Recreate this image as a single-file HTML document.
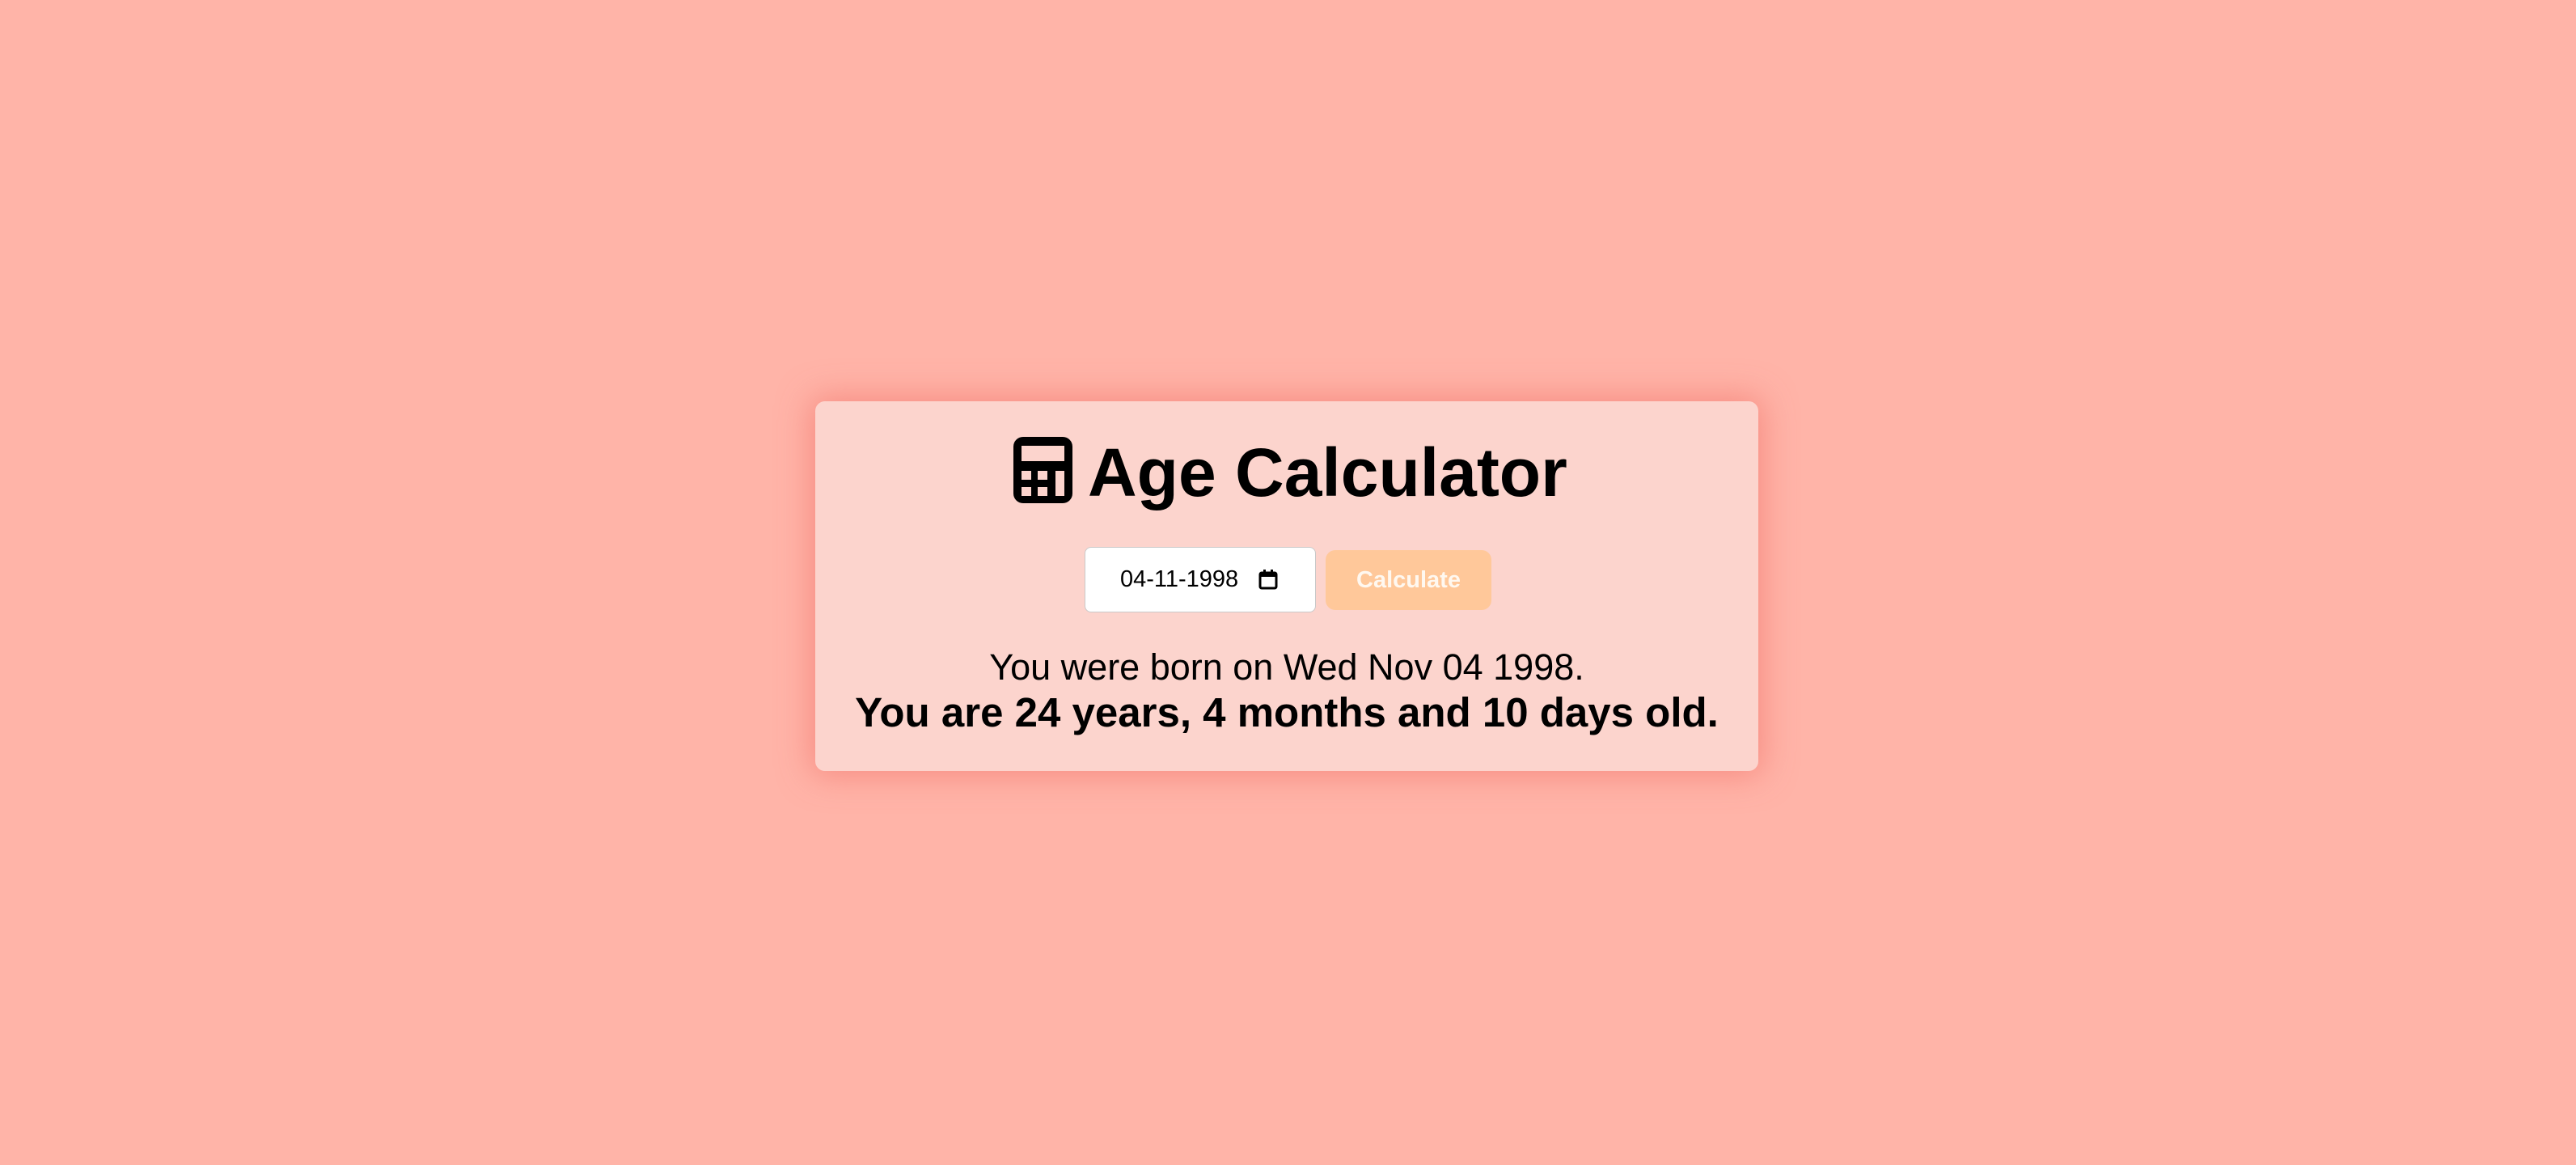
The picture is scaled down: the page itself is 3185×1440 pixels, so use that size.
<!DOCTYPE html>
<html><head><meta charset="utf-8"><style>
html,body{margin:0;padding:0;}
body{width:3185px;height:1440px;background:#ffb4a8;position:relative;overflow:hidden;font-family:"Liberation Sans",Arial,sans-serif;}
.card{position:absolute;left:1008px;top:496px;width:1166px;height:457px;background:#fcd4cd;border-radius:12px;box-shadow:0 0 40px 6px rgba(240,110,100,0.55);}
.title{position:absolute;left:1253px;top:540px;height:84px;white-space:nowrap;}
.title svg{position:absolute;left:0;top:0;}
.title span{position:absolute;left:92px;top:-6px;font-weight:bold;font-size:84px;line-height:100px;color:#000;}
.inp{position:absolute;left:1341px;top:676px;width:284px;height:79px;background:#fff;border:1px solid #c9c9c9;border-radius:8px;}
.inp span{position:absolute;left:43px;top:22px;font-size:29px;line-height:34px;color:#000;}
.inp svg{position:absolute;left:214px;top:27px;}
.btn{position:absolute;left:1639px;top:680px;width:205px;height:74px;background:#ffc89a;border-radius:12px;color:#fff8f0;font-weight:bold;font-size:29px;line-height:74px;text-align:center;}
.l1{position:absolute;left:958px;width:1266px;top:798px;text-align:center;font-size:45px;line-height:54px;color:#000;}
.l2{position:absolute;left:958px;width:1266px;top:854px;text-align:center;font-size:51px;line-height:54px;font-weight:bold;color:#000;}
</style></head><body>
<div class="card"></div>
<div class="title">
<svg width="73" height="82" viewBox="0 0 73 82">
<path fill="#000" fill-rule="evenodd" d="M12 0H61A12 12 0 0 1 73 12V70A12 12 0 0 1 61 82H12A12 12 0 0 1 0 70V12A12 12 0 0 1 12 0Z
M10 11H63V30H10Z
M10 42H22V53H10Z M30 42H42V53H30Z M52 42H63V73H52Z
M10 62H22V73H10Z M30 62H42V73H30Z"/>
</svg>
<span>Age Calculator</span>
</div>
<div class="inp"><span>04-11-1998</span>
<svg width="24" height="25" viewBox="0 0 24 25"><rect x="2" y="4" width="20" height="19" rx="2" fill="none" stroke="#000" stroke-width="3"/><rect x="2" y="4" width="20" height="5" fill="#000"/><rect x="6" y="0" width="3" height="5" fill="#000"/><rect x="15" y="0" width="3" height="5" fill="#000"/></svg>
</div>
<div class="btn">Calculate</div>
<div class="l1">You were born on Wed Nov 04 1998.</div>
<div class="l2">You are 24 years, 4 months and 10 days old.</div>
</body></html>
